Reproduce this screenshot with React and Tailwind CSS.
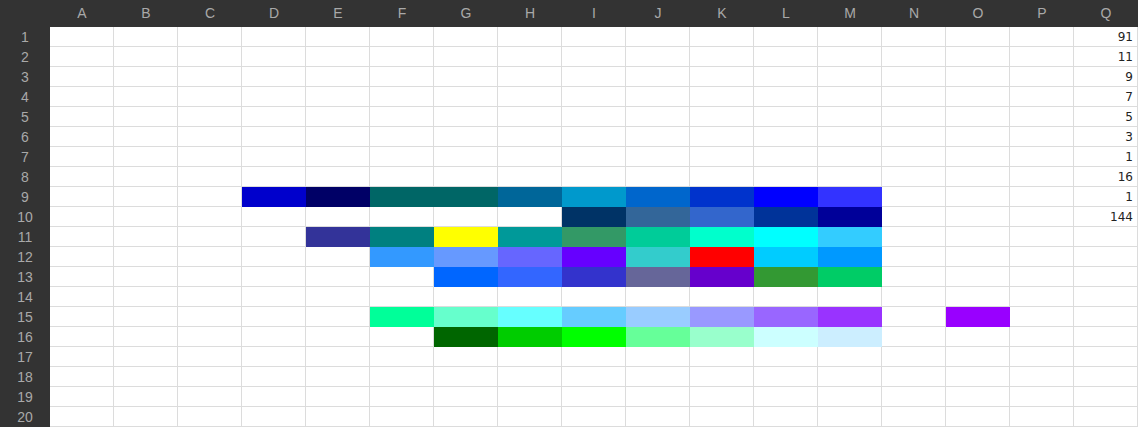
import React from "react";

const COLS = ["A", "B", "C", "D", "E", "F", "G", "H", "I", "J", "K", "L", "M", "N", "O", "P", "Q"];

// filled cells: key "COLROW" -> background class
const FILLS = {
  D9: "bg-[#0000cc]",
  E9: "bg-[#000066]",
  F9: "bg-[#006666]",
  G9: "bg-[#006666]",
  H9: "bg-[#006699]",
  I9: "bg-[#0099cc]",
  J9: "bg-[#0066cc]",
  K9: "bg-[#0033cc]",
  L9: "bg-[#0000ff]",
  M9: "bg-[#3333ff]",

  I10: "bg-[#003366]",
  J10: "bg-[#336699]",
  K10: "bg-[#3366cc]",
  L10: "bg-[#003399]",
  M10: "bg-[#000099]",

  E11: "bg-[#333399]",
  F11: "bg-[#008080]",
  G11: "bg-[#ffff00]",
  H11: "bg-[#009999]",
  I11: "bg-[#339966]",
  J11: "bg-[#00cc99]",
  K11: "bg-[#00ffcc]",
  L11: "bg-[#00ffff]",
  M11: "bg-[#33ccff]",

  F12: "bg-[#3399ff]",
  G12: "bg-[#6699ff]",
  H12: "bg-[#6666ff]",
  I12: "bg-[#6600ff]",
  J12: "bg-[#33cccc]",
  K12: "bg-[#ff0000]",
  L12: "bg-[#00ccff]",
  M12: "bg-[#0099ff]",

  G13: "bg-[#0066ff]",
  H13: "bg-[#3366ff]",
  I13: "bg-[#3333cc]",
  J13: "bg-[#666699]",
  K13: "bg-[#6600cc]",
  L13: "bg-[#339933]",
  M13: "bg-[#00cc66]",

  F15: "bg-[#00ff99]",
  G15: "bg-[#66ffcc]",
  H15: "bg-[#66ffff]",
  I15: "bg-[#66ccff]",
  J15: "bg-[#99ccff]",
  K15: "bg-[#9999ff]",
  L15: "bg-[#9966ff]",
  M15: "bg-[#9933ff]",
  O15: "bg-[#9900ff]",

  G16: "bg-[#006600]",
  H16: "bg-[#00cc00]",
  I16: "bg-[#00ff00]",
  J16: "bg-[#66ff99]",
  K16: "bg-[#99ffcc]",
  L16: "bg-[#ccffff]",
  M16: "bg-[#cceeff]",
};

const VALUES = { Q1: "91", Q2: "11", Q3: "9", Q4: "7", Q5: "5", Q6: "3", Q7: "1", Q8: "16", Q9: "1", Q10: "144" };

export default function App() {
  const rows = Array.from({ length: 20 }, (_, i) => i + 1);

  return (
    <div className="w-[1138px] h-[427px] overflow-hidden bg-white font-['Liberation_Sans',Arial,sans-serif]">
      {/* Column header */}
      <div className="grid grid-cols-[50px_repeat(17,64px)] h-[27px] bg-[#333333]">
        <div />
        {COLS.map((c) => (
          <div key={c} className="flex items-center justify-center text-[14px] text-[#a9a9a9]">
            {c}
          </div>
        ))}
      </div>

      {rows.map((r) => (
        <div key={r} className="grid grid-cols-[50px_repeat(17,64px)] h-[20px]">
          <div className="flex items-center justify-center bg-[#333333] text-[14px] text-[#a9a9a9]">
            {r}
          </div>
          {COLS.map((c) => {
            const key = c + r;
            const fill = FILLS[key] || "bg-white shadow-[inset_-1px_-1px_0_#dcdcdc]";
            return (
              <div
                key={key}
                className={`${fill} h-[20px] flex items-center justify-end pr-[5px] text-[12px] leading-none text-[#222222] font-['DejaVu_Sans',sans-serif]`}
              >
                {VALUES[key]}
              </div>
            );
          })}
        </div>
      ))}
    </div>
  );
}
